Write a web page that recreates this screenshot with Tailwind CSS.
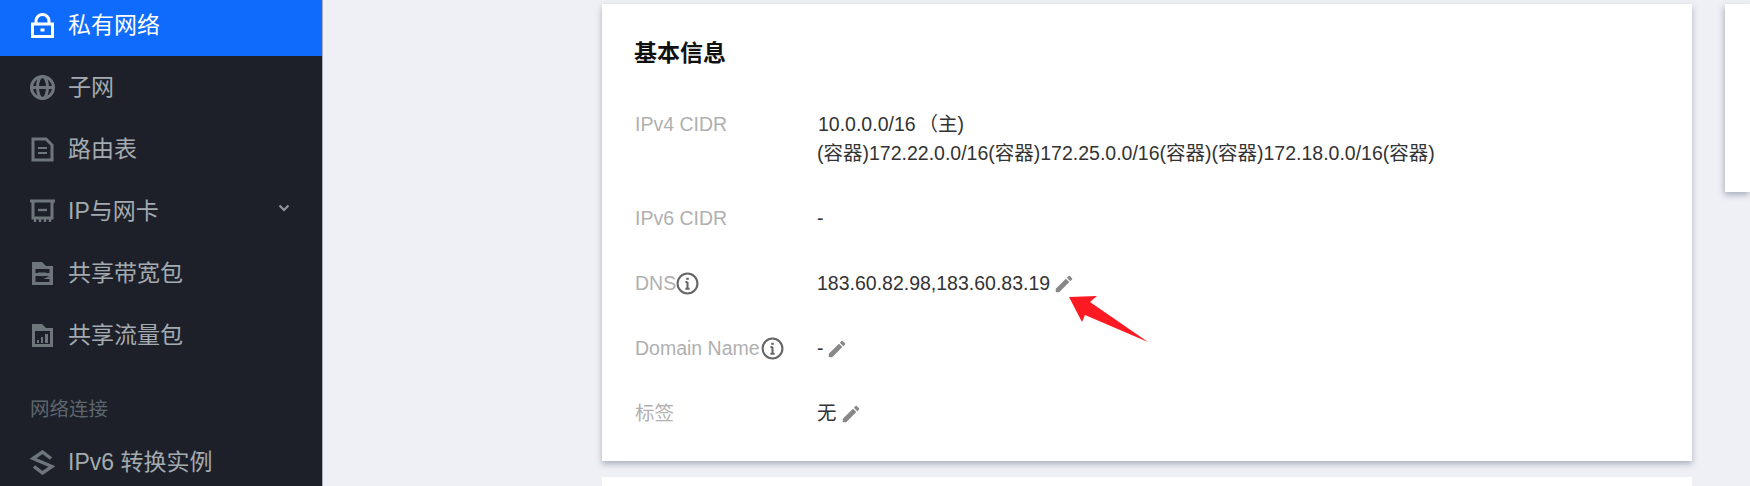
<!DOCTYPE html>
<html lang="zh-CN">
<head>
    <meta charset="UTF-8">
    <title>私有网络 - 基本信息</title>
    <script src="https://cdn.jsdelivr.net/npm/@tailwindcss/browser@4"></script>
</head>
<body class="bg-[#eef0f5] font-['Liberation_Sans','Noto_Sans_CJK_SC',sans-serif]">
    <div class="relative flex h-[486px] w-[1750px] overflow-hidden">
        <!-- Sidebar -->
        <aside class="h-full w-[322px] shrink-0 overflow-hidden bg-[#1e2029] text-[23px] text-[#a3abb0] shadow-[1px_0_0_#a9adb8]">
            <nav class="-mt-[6px]">
                <a class="flex h-[62px] items-center gap-[13px] bg-[#0f6bfb] pl-[30px] text-white">
                    <svg class="h-[25px] w-[25px]" viewBox="0 0 25 25" fill="none" stroke="currentColor" stroke-width="3"><path d="M2.500 11h20v12.500h-20zM6 11V8a6.500 6.500 0 0 1 13 0v3"/><path d="M10.500 17h4" stroke-width="3"/></svg>
                    <span>私有网络</span>
                </a>
                <a class="flex h-[62px] items-center gap-[13px] pl-[30px]">
                    <svg class="h-[25px] w-[25px]" viewBox="0 0 25 25" fill="none" stroke="#6f767b" stroke-width="3"><circle cx="12.500" cy="12.500" r="11"/><ellipse cx="12.500" cy="12.500" rx="5" ry="11"/><path d="M2 12.500h21"/></svg>
                    <span>子网</span>
                </a>
                <a class="flex h-[62px] items-center gap-[13px] pl-[30px]">
                    <svg class="h-[25px] w-[25px]" viewBox="0 0 25 25" fill="none" stroke="#6f767b" stroke-width="3"><path d="M3 2h13l6 6v15H3z"/><path d="M8 11h9M8 16h9" stroke-width="2"/></svg>
                    <span>路由表</span>
                </a>
                <a class="flex h-[62px] items-center gap-[13px] pl-[30px]">
                    <svg class="h-[25px] w-[25px]" viewBox="0 0 25 25" fill="none" stroke="#6f767b" stroke-width="3"><path d="M0 2h26M3 2v17h19V2"/><path d="M8 11h9" stroke-width="2.400"/><path d="M5 19v4M10 19v4M15 19v4M20 19v4" stroke-width="2.400"/></svg>
                    <span>IP与网卡</span>
                    <svg class="ml-auto mr-[32px] -mt-[6px] h-[10px] w-[12px]" viewBox="0 0 12 10" fill="none" stroke="#8e959a" stroke-width="2.200"><path d="M1.500 2.500 6 7l4.500-4.500"/></svg>
                </a>
                <a class="flex h-[62px] items-center gap-[13px] pl-[30px]">
                    <svg class="h-[25px] w-[25px]" viewBox="0 0 25 25" fill="#6f767b"><path fill-rule="evenodd" d="M2 1h10l4 4h7v19H2zM5.500 8v4h14V8zM5.500 15v6h14v-3h-6l6-3z"/><path d="M8 11.500h8v1.500l-5 2H8z"/></svg>
                    <span>共享带宽包</span>
                </a>
                <a class="flex h-[62px] items-center gap-[13px] pl-[30px]">
                    <svg class="h-[25px] w-[25px]" viewBox="0 0 25 25" fill="#6f767b"><path fill-rule="evenodd" d="M2 1h10l4 4h7v19H2zM5 8v13h15V8z"/><path d="M7 17h2v3H7zM11 14h2v6h-2zM15 11h3v9h-3z"/></svg>
                    <span>共享流量包</span>
                </a>
                <div class="pl-[30px] pt-[29px] text-[19.500px] leading-[28px] text-[#5c666e]">网络连接</div>
                <a class="mt-[8px] flex h-[62px] items-center gap-[13px] pl-[30px]">
                    <svg class="h-[25px] w-[25px]" viewBox="0 0 25 25" fill="none" stroke="#6f767b" stroke-width="3.400"><path d="M21 8.500 12.500 2 3 8.500l19 8-9.500 6.500L4 16.500"/></svg>
                    <span>IPv6 转换实例</span>
                </a>
            </nav>
        </aside>

        <!-- Main content -->
        <main class="flex flex-1 gap-[33px] pl-[280px] pt-[4px]">
            <div class="w-[1090px] shrink-0">
                <section class="h-[457px] bg-white px-[32px] pt-[34px] shadow-[0_3px_6px_rgba(90,100,125,0.45)]">
                    <h3 class="text-[23px] font-bold leading-[30px] text-[#111]">基本信息</h3>
                    <div class="mt-[42px] flex flex-col gap-[36px] text-[19.500px] leading-[29px] text-[#333]">
                        <div class="flex">
                            <div class="w-[183px] shrink-0 pl-[1px] text-[#b0b0b0]">IPv4 CIDR</div>
                            <div>
                                <div class="pl-[1px]"><span class="mr-[3px]">10.0.0.0/16</span>（主)</div>
                                <div>(容器)172.22.0.0/16(容器)172.25.0.0/16(容器)(容器)172.18.0.0/16(容器)</div>
                            </div>
                        </div>
                        <div class="flex">
                            <div class="w-[183px] shrink-0 pl-[1px] text-[#b0b0b0]">IPv6 CIDR</div>
                            <div>-</div>
                        </div>
                        <div class="flex">
                            <div class="flex w-[183px] shrink-0 items-center pl-[1px] text-[#b0b0b0]">DNS
                                <svg class="h-[23px] w-[23px]" viewBox="0 0 22 22" fill="none" stroke="#666" stroke-width="2"><circle cx="11" cy="11" r="9.500"/><path d="M11 9.500V16M9 16h4M9 9.500h2"/><path d="M11 5.500v2" stroke-width="2.400"/></svg>
                            </div>
                            <div class="flex items-center">
                                <span>183.60.82.98,183.60.83.19</span>
                                <svg class="ml-[3px] h-[22px] w-[22px]" viewBox="0 0 24 24" fill="#888"><path d="M3 17.250V21h3.750L17.810 9.940l-3.750-3.750L3 17.250zM20.710 7.040a1 1 0 0 0 0-1.410l-2.340-2.340a1 1 0 0 0-1.410 0l-1.830 1.830 3.750 3.750 1.830-1.830z"/></svg>
                            </div>
                        </div>
                        <div class="flex">
                            <div class="flex w-[183px] shrink-0 items-center pl-[1px] text-[#b0b0b0]">Domain Name
                                <svg class="ml-[1px] h-[23px] w-[23px]" viewBox="0 0 22 22" fill="none" stroke="#666" stroke-width="2"><circle cx="11" cy="11" r="9.500"/><path d="M11 9.500V16M9 16h4M9 9.500h2"/><path d="M11 5.500v2" stroke-width="2.400"/></svg>
                            </div>
                            <div class="flex items-center">
                                <span>-</span>
                                <svg class="ml-[2px] h-[22px] w-[22px]" viewBox="0 0 24 24" fill="#888"><path d="M3 17.250V21h3.750L17.810 9.940l-3.750-3.750L3 17.250zM20.710 7.040a1 1 0 0 0 0-1.410l-2.340-2.340a1 1 0 0 0-1.410 0l-1.830 1.830 3.750 3.750 1.830-1.830z"/></svg>
                            </div>
                        </div>
                        <div class="flex">
                            <div class="w-[183px] shrink-0 pl-[1px] text-[#b0b0b0]">标签</div>
                            <div class="flex items-center">
                                <span>无</span>
                                <svg class="ml-[3px] h-[22px] w-[22px]" viewBox="0 0 24 24" fill="#888"><path d="M3 17.250V21h3.750L17.810 9.940l-3.750-3.750L3 17.250zM20.710 7.040a1 1 0 0 0 0-1.410l-2.340-2.340a1 1 0 0 0-1.410 0l-1.830 1.830 3.750 3.750 1.830-1.830z"/></svg>
                            </div>
                        </div>
                    </div>
                </section>
                <section class="mt-[16px] h-[40px] bg-white"></section>
            </div>
            <div class="h-[188px] flex-1 bg-white shadow-[-1px_3px_6px_rgba(90,100,125,0.45)]"></div>
        </main>

        <!-- Annotation arrow -->
        <svg class="absolute left-[1060px] top-[290px] h-[60px] w-[95px]" viewBox="0 0 95 60" fill="#fe1a22"><path d="M9 7 37 6 30 12 88 52 25 25 22 32z"/></svg>
    </div>
</body>
</html>
